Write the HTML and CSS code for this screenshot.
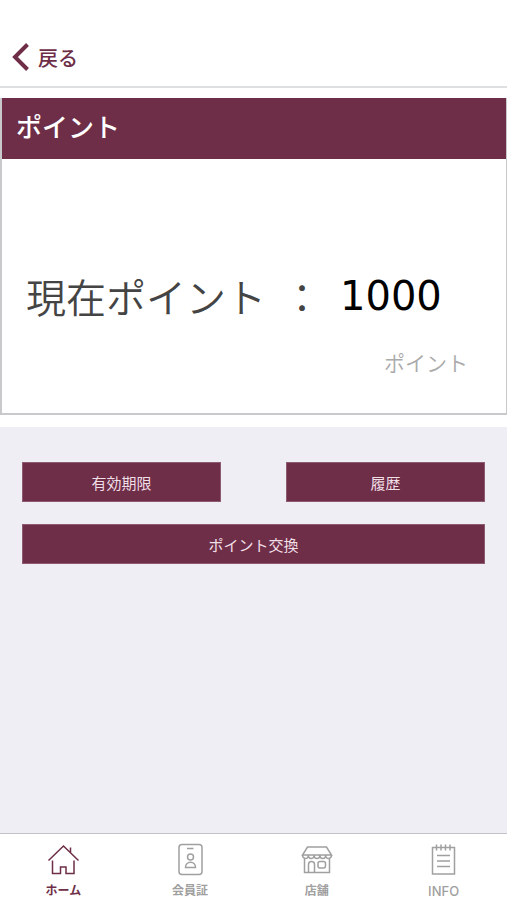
FILE: index.html
```html
<!DOCTYPE html>
<html lang="ja">
<head>
  <meta charset="UTF-8">
  <meta name="viewport" content="width=device-width, initial-scale=1.0">
  <title>ポイント</title>
  <link rel="stylesheet" href="styles.css">
</head>
<body>
  <header class="header">
    <a class="back" href="#">
      <svg class="back-icon" width="18" height="30" viewBox="0 0 18 30"><path d="M15.500 2.500L3 15l12.500 12.500"/></svg>
      戻る
    </a>
  </header>

  <section class="point-area">
    <div class="card">
      <h1 class="card-title">ポイント</h1>
      <div class="card-body">
        <div class="balance">
          <span class="label">現在ポイント</span>
          <span class="colon">：</span>
          <span class="number">1000</span>
        </div>
        <p class="unit">ポイント</p>
      </div>
    </div>
  </section>

  <main class="actions">
    <button class="btn" type="button">有効期限</button>
    <button class="btn" type="button">履歴</button>
    <button class="btn wide" type="button">ポイント交換</button>
  </main>

  <nav class="tabs">
    <a class="tab active" href="#">
      <svg class="tab-icon" width="34" height="34" viewBox="0 0 34 34">
        <path d="M2.500 17.500L17.500 3l15 14.500M24.500 10V4.500M6.500 17.500V30.500H14.500V24H20V30.500H28V17.500"/>
      </svg>
      ホーム
    </a>
    <a class="tab" href="#">
      <svg class="tab-icon" width="34" height="34" viewBox="0 0 34 34">
        <rect x="6" y="1.500" width="23" height="30" rx="3"/>
        <path d="M14 5.500H20.500M12.500 24.500C12.500 17.500 22.500 17.500 22.500 24.500Z"/>
        <circle cx="17.500" cy="14" r="3"/>
      </svg>
      会員証
    </a>
    <a class="tab" href="#">
      <svg class="tab-icon" width="34" height="34" viewBox="0 0 34 34">
        <path d="M7.500 4H26.500L31.500 12H2.500ZM2.500 12C2.500 16.500 8.300 16.500 8.300 12.500C8.300 16.500 14.100 16.500 14.100 12.500C14.100 16.500 19.900 16.500 19.900 12.500C19.900 16.500 25.700 16.500 25.700 12.500C25.700 16.500 31.500 16.500 31.500 12M4.500 16V29.500H29.500V16M8.500 29.500V21.500C8.500 17.500 14.500 17.500 14.500 21.500V29.500"/>
        <rect x="18" y="18.500" width="7.500" height="6.500" rx="2"/>
      </svg>
      店舗
    </a>
    <a class="tab latin" href="#">
      <svg class="tab-icon" width="34" height="34" viewBox="0 0 34 34">
        <path d="M5.500 4.500H27.500V31H5.500ZM9.500 1.500V7.500M14 1.500V7.500M18.500 1.500V7.500M23 1.500V7.500M10 12.500H23M10 18H23M10 23.500H23"/>
      </svg>
      INFO
    </a>
  </nav>
</body>
</html>
```

FILE: styles.css
```css
* {
  margin: 0;
  padding: 0;
  box-sizing: border-box;
}

body {
  display: flex;
  flex-direction: column;
  min-height: 100vh;
  font-family: "Liberation Sans", "Noto Sans CJK JP", sans-serif;
  background: #fff;
  color: #444;
}

a {
  text-decoration: none;
}

svg {
  fill: none;
  stroke: currentColor;
}

/* Header */
.header {
  padding: 40px 12px 12px;
  border-bottom: 2px solid #dedfe1;
}

.back {
  display: flex;
  align-items: center;
  gap: 8px;
  width: max-content;
  height: 34px;
  font-size: 20px;
  font-weight: 500;
  color: #6e2e47;
}

.back-icon {
  stroke-width: 4;
}

/* Point card */
.point-area {
  padding: 10px 0 12px;
}

.card {
  border: 2px solid #c9c9cb;
  border-width: 0 1px 2px 2px;
}

.card-title {
  padding: 0 14px;
  font-size: 26px;
  font-weight: 500;
  line-height: 61px;
  background: #6e2e47;
  color: #fff;
}

.card-body {
  padding: 107px 38px 33px 24px;
}

.balance {
  display: flex;
  align-items: center;
  height: 60px;
  font-family: "Noto Sans CJK JP", sans-serif;
  font-size: 40px;
  line-height: 60px;
}

.label,
.colon {
  font-weight: 350;
}

.colon {
  margin: 0 18px 0 16px;
}

.number {
  font-family: "DejaVu Sans", sans-serif;
  color: #000;
}

.unit {
  margin-top: 22px;
  font-size: 21px;
  font-weight: 350;
  line-height: 32px;
  text-align: right;
  color: #aaa;
}

/* Buttons */
.actions {
  flex: 1;
  display: grid;
  grid-template-columns: 1fr 1fr;
  align-content: start;
  gap: 22px 65px;
  padding: 35px 22px;
  background: #efeef4;
}

.btn {
  height: 40px;
  border: 1px solid #8d5a70;
  font-family: inherit;
  font-size: 15px;
  background: #6e2e47;
  color: #f0dfe6;
}

.wide {
  grid-column: 1 / -1;
}

/* Tab bar */
.tabs {
  display: flex;
  border-top: 1px solid #c4c4c8;
}

.tab {
  flex: 1;
  display: flex;
  flex-direction: column;
  align-items: center;
  gap: 5px;
  padding: 9px 0 0;
  font-family: "Inter", "Noto Sans CJK JP", sans-serif;
  font-size: 12px;
  font-weight: 700;
  line-height: 18px;
  color: #a0a0a0;
}

.tab-icon {
  stroke-width: 1.5;
}

.latin {
  font-size: 13px;
  font-weight: 500;
}

.active {
  color: #6e2e47;
}
```
